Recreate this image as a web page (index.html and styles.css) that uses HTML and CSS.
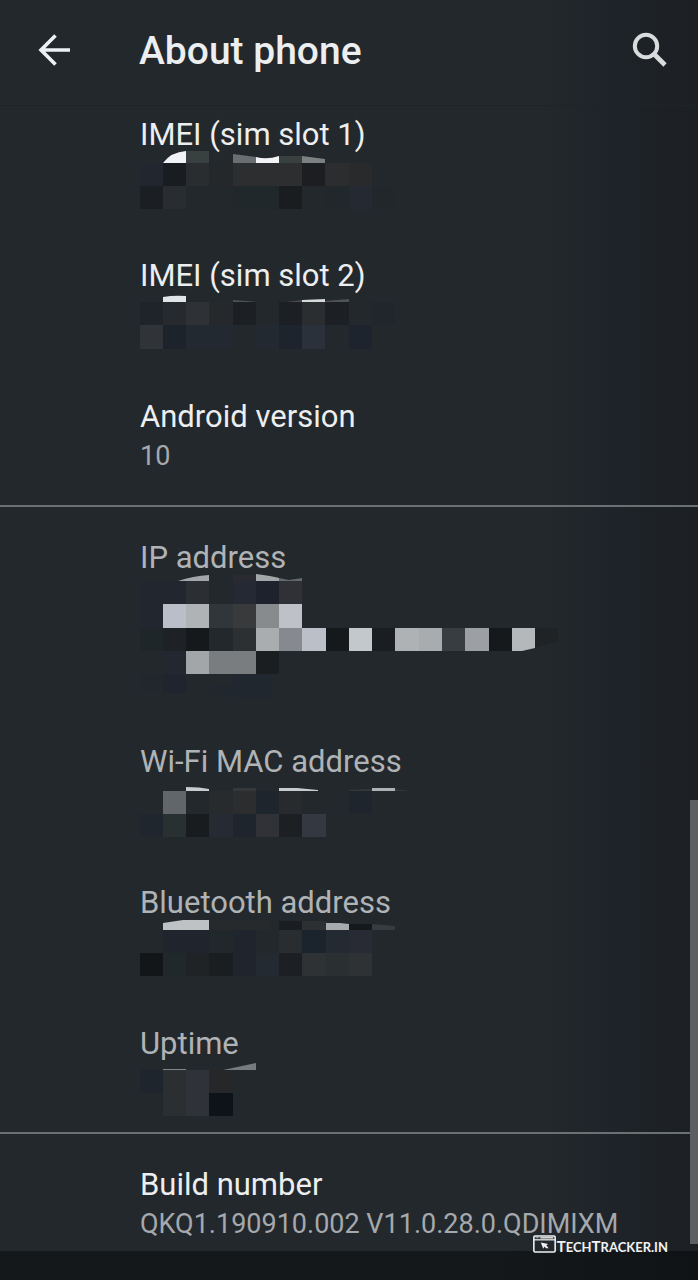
FILE: index.html
```html
<!DOCTYPE html>
<html lang="en">
<head>
<meta charset="utf-8">
<meta name="viewport" content="width=device-width, initial-scale=1">
<title>About phone</title>
<link rel="stylesheet" href="styles.css">
</head>
<body>
<div class="screen">
  <header class="bar">
    <button class="icon-button back" type="button" aria-label="Back">
      <svg width="34" height="34" viewBox="0 0 34 34" fill="none" stroke="#eef1f3" stroke-width="3.6"><path d="M33 17H4M18.500 2.500L4 17L18.500 31.500"/></svg>
    </button>
    <h1 class="title">About phone</h1>
    <button class="icon-button search" type="button" aria-label="Search">
      <svg width="36" height="36" viewBox="0 0 36 36" fill="none" stroke="#d9dcdd"><circle cx="14" cy="14" r="11.200" stroke-width="4"/><path d="M22 22L33 33" stroke-width="4.600"/></svg>
    </button>
  </header>
  <main class="content">
    <dl class="section first">
      <div class="item">
        <dt class="label">IMEI (sim slot 1)</dt>
        <dd class="value"><svg class="mosaic" role="img" aria-label="Hidden">
          <path fill="#f1f3f7" d="M23 8Q31-3 46-4V8Z"/><path fill="#384040" d="M46-4H69V8H46Z"/>
          <path fill="#6a6e70" d="M93-1L116 2V8H93Z"/><path fill="#f1f3f7" d="M116 2Q127 5 139 1V8H116Z"/><path fill="#384040" d="M139 1H162V8H139Z"/><path fill="#7c8081" d="M162 1L185 4V8H162Z"/>
          <path fill="#22272f" d="M0 8H23V31H0Z"/><path fill="#191c20" d="M23 8H46V31H23Z"/><path fill="#292d30" d="M46 8H69V31H46Z"/><path fill="#24282b" d="M69 8H93V31H69Z"/><path fill="#2d2e30" d="M93 8H162V31H93Z"/><path fill="#1c1e21" d="M162 8H185V31H162Z"/><path fill="#2c2d2f" d="M185 8H209V31H185Z"/><path fill="#292a2c" d="M209 8H232V31H209Z"/>
          <path fill="#1b1e22" d="M0 31H23V54H0Z"/><path fill="#292d30" d="M23 31H46V54H23Z"/><path fill="#20282b" d="M93 31H139V54H93Z"/><path fill="#191d20" d="M139 31H162V54H139Z"/><path fill="#20282b" d="M185 31H209V54H185ZM232 31H255V54H232Z"/><path fill="#252a32" d="M209 31H232V54H209Z"/>
        </svg></dd>
      </div>
      <div class="item">
        <dt class="label">IMEI (sim slot 2)</dt>
        <dd class="value"><svg class="mosaic" role="img" aria-label="Hidden">
          <path fill="#e0e5e7" d="M23 1Q34-1 46 0V6H23Z"/><path fill="#505254" d="M93 4L118 6H93ZM185 5L209 3V6H185Z"/><path fill="#d6d9da" d="M162 4L185 3V6H162Z"/><path fill="#484a4b" d="M145 6L162 4V6Z"/>
          <path fill="#1f232a" d="M0 6H23V29H0Z"/><path fill="#262a2e" d="M23 6H46V29H23Z"/><path fill="#2e3236" d="M46 6H69V29H46Z"/><path fill="#25292b" d="M69 6H93V29H69Z"/><path fill="#1c2024" d="M93 6H116V29H93ZM139 6H162V29H139ZM185 6H209V29H185Z"/><path fill="#2a2e30" d="M162 6H185V29H162Z"/><path fill="#20262c" d="M232 6H255V29H232Z"/>
          <path fill="#303438" d="M0 29H23V53H0Z"/><path fill="#1d232b" d="M23 29H46V53H23Z"/><path fill="#222931" d="M46 29H93V53H46ZM116 29H139V53H116Z"/><path fill="#1e242d" d="M139 29H162V53H139ZM209 29H232V53H209Z"/><path fill="#2b313b" d="M162 29H185V53H162Z"/>
        </svg></dd>
      </div>
      <div class="item">
        <dt class="label">Android version</dt>
        <dd class="value">10</dd>
      </div>
    </dl>
    <dl class="section muted">
      <div class="item">
        <dt class="label">IP address</dt>
        <dd class="value tall"><svg class="mosaic" role="img" aria-label="Hidden">
          <path fill="#a3a7aa" d="M38 3Q53-2 69-3V3ZM116-4Q132-2 139 0V3H116Z"/><path fill="#64686b" d="M139 0L149 2L162 0V3H139Z"/><path fill="#292b30" d="M93-3H116V3H93Z"/>
          <path fill="#22272f" d="M0 3H46V26H0ZM0 26H23V50H0Z"/><path fill="#2b2e33" d="M46 3H69V26H46Z"/><path fill="#242933" d="M93 3H116V26H93Z"/><path fill="#1d222c" d="M116 3H139V26H116Z"/><path fill="#303137" d="M139 3H162V26H139Z"/>
          <path fill="#b9bec8" d="M23 26H46V50H23Z"/><path fill="#b0b3b5" d="M46 26H69V50H46Z"/><path fill="#303639" d="M69 26H93V50H69Z"/><path fill="#383a3c" d="M93 26H116V50H93Z"/><path fill="#878b8e" d="M116 26H139V50H116Z"/><path fill="#bec2c8" d="M139 26H162V50H139Z"/>
          <path fill="#1f262a" d="M0 50H23V73H0Z"/><path fill="#1e2226" d="M23 50H46V73H23Z"/><path fill="#15191c" d="M46 50H69V73H46ZM186 50H209V73H186ZM349 50H372V73H349Z"/><path fill="#2d3033" d="M93 50H116V73H93Z"/><path fill="#a9adb0" d="M116 50H139V73H116Z"/><path fill="#868a90" d="M139 50H162V73H139Z"/><path fill="#bbbfc8" d="M162 50H186V73H162Z"/><path fill="#c3c8cd" d="M209 50H232V73H209Z"/><path fill="#1a1e22" d="M232 50H255V73H232Z"/><path fill="#aeb2b5" d="M255 50H279V73H255Z"/><path fill="#a8acaf" d="M279 50H302V73H279Z"/><path fill="#373d40" d="M302 50H325V73H302Z"/><path fill="#9c9fa3" d="M325 50H349V73H325Z"/><path fill="#b4b8bb" d="M372 50H395V70L382 73H372Z"/><path fill="#1f2326" d="M395 50H418V63L395 70Z"/>
          <path fill="#23272f" d="M23 73H46V96H23Z"/><path fill="#a2a6a9" d="M46 73H69V96H46Z"/><path fill="#797d80" d="M69 73H116V96H69Z"/><path fill="#1a1e21" d="M116 73H139V96H116Z"/>
          <path fill="#22272e" d="M0 96H23V112H0Z"/><path fill="#1f252f" d="M23 96H46V115H23Z"/><path fill="#20272e" d="M69 108H93V118H69ZM93 96H132V120H93Z"/>
        </svg></dd>
      </div>
      <div class="item">
        <dt class="label">Wi-Fi MAC address</dt>
        <dd class="value"><svg class="mosaic" role="img" aria-label="Hidden">
          <path fill="#c8cccf" d="M46 5Q60 5 69 7V9H46ZM139 6H157L178 8V9H139Z"/><path fill="#aeb2b5" d="M232 6H255V9H232Z"/><path fill="#34383b" d="M93 6H116V9H93ZM255 7L269 9H255ZM209 8L232 7V9H209Z"/>
          <path fill="#62666a" d="M23 9H46V32H23Z"/><path fill="#282b2e" d="M69 9H93V32H69ZM139 9H162V32H139Z"/><path fill="#2b2d2f" d="M93 9H116V32H93Z"/><path fill="#1e252d" d="M116 9H139V32H116ZM209 9H232V32H209Z"/>
          <path fill="#20262d" d="M0 32H23V55H0Z"/><path fill="#293032" d="M23 32H46V55H23Z"/><path fill="#181c1f" d="M46 32H69V55H46Z"/><path fill="#252a33" d="M69 32H93V55H69Z"/><path fill="#1f252d" d="M93 32H116V55H93Z"/><path fill="#303238" d="M116 32H139V55H116Z"/><path fill="#1d2023" d="M139 32H162V55H139Z"/><path fill="#343840" d="M162 32H186V55H162Z"/>
        </svg></dd>
      </div>
      <div class="item">
        <dt class="label">Bluetooth address</dt>
        <dd class="value"><svg class="mosaic" role="img" aria-label="Hidden">
          <path fill="#bec2c5" d="M23 0L43-3H69V7H23Z"/><path fill="#272a2c" d="M69-3H130V7H69Z"/><path fill="#1a1e22" d="M139-2H162V7H139Z"/><path fill="#2c3033" d="M162-2H186V7H162Z"/><path fill="#a7abae" d="M186 0H200L209 1V7H186Z"/><path fill="#15191c" d="M209 1H232V7H209Z"/><path fill="#383b3f" d="M232 1L255 3V7H232Z"/>
          <path fill="#1f242d" d="M23 7H69V30H23ZM93 7H116V53H93Z"/><path fill="#20282b" d="M69 7H93V30H69ZM23 30H46V53H23Z"/><path fill="#292d30" d="M139 7H162V30H139Z"/><path fill="#1b232c" d="M162 7H186V30H162Z"/><path fill="#242a32" d="M186 7H209V30H186ZM116 30H139V53H116Z"/><path fill="#282b34" d="M209 7H232V30H209Z"/>
          <path fill="#121619" d="M0 30H23V53H0Z"/><path fill="#1f2326" d="M46 30H69V53H46Z"/><path fill="#1b1e21" d="M69 30H93V53H69Z"/><path fill="#1c2025" d="M139 30H162V53H139Z"/><path fill="#2e3234" d="M162 30H186V53H162ZM209 30H232V53H209Z"/><path fill="#2a3031" d="M186 30H209V53H186Z"/>
        </svg></dd>
      </div>
      <div class="item">
        <dt class="label">Uptime</dt>
        <dd class="value"><svg class="mosaic" role="img" aria-label="Hidden">
          <path fill="#83878b" d="M23 5H46V6H23Z"/><path fill="#777b7f" d="M83 6L116-1V6Z"/>
          <path fill="#1f252d" d="M0 6H23V29H0Z"/><path fill="#2b2f31" d="M23 6H46V52H23Z"/><path fill="#303239" d="M46 6H69V52H46Z"/><path fill="#252728" d="M69 6H93V29H69Z"/><path fill="#0e131a" d="M69 29H93V52H69Z"/>
        </svg></dd>
      </div>
    </dl>
    <dl class="section last">
      <div class="item">
        <dt class="label">Build number</dt>
        <dd class="value">QKQ1.190910.002 V11.0.28.0.QDIMIXM</dd>
      </div>
    </dl>
    <div class="scrollbar"></div>
  </main>
  <footer class="nav">
    <div class="watermark">
      <svg width="23" height="18" viewBox="0 0 22 17" fill="none" stroke="#f1f2f3"><rect x=".8" y=".8" width="20.400" height="15.400" rx="1.200" stroke-width="1.500"/><path d="M1 4.500H21" stroke-width="1.200"/><path d="M2.500 2.600H6" stroke-width="1" stroke-dasharray="1 .5"/><path d="M7 2.600H19.500" stroke-width="1.300"/><path d="M7.500 7L14.500 8.500L12.700 9.700L15 12.500H12.500L11 11L9.800 13Z" fill="#f1f2f3" stroke="none"/></svg>
      <span class="brand"><span class="initial">T</span>ech<span class="initial">T</span>racker.in</span>
    </div>
  </footer>
</div>
</body>
</html>
```
FILE: styles.css
```css
* {
  box-sizing: border-box;
}

body {
  margin: 0;
  background: #14171a;
  color: #eceef0;
  font-family: Roboto, "Liberation Sans", sans-serif;
}

.screen {
  display: flex;
  flex-direction: column;
  min-height: 100vh;
  background: linear-gradient(90deg, #23282c 0%, #23282c 78%, #1f242a 87%, #1d2125 94%, #1c2024 100%);
}

.bar {
  display: flex;
  align-items: center;
  height: 106px;
  padding: 0 30px 3px 37px;
  border-bottom: 1px solid #1f2429;
}

.icon-button {
  display: flex;
  padding: 0 0 3px;
  border: 0;
  background: none;
}

.back {
  width: 102px;
}

.title {
  flex: 1;
  margin: 0;
  font-size: 39px;
  font-weight: 500;
  line-height: 48px;
}

.content {
  position: relative;
}

.section {
  display: flex;
  flex-direction: column;
  gap: 63px;
  margin: 0;
  padding: 31px 16px 30px 140px;
  border-bottom: 2px solid #6b7073;
}

.first {
  padding-top: 9px;
}

.last {
  padding-bottom: 8px;
  border-bottom: 0;
}

.label {
  font-size: 31px;
  line-height: 40px;
}

.muted .label {
  color: #b0b3b6;
}

.value {
  height: 38px;
  margin: 0;
  color: #a5a9ad;
  font-size: 27px;
  line-height: 38px;
  white-space: nowrap;
}

.tall {
  height: 101px;
}

.mosaic {
  display: block;
  width: 100%;
  height: 100%;
  overflow: visible;
}

.scrollbar {
  position: absolute;
  right: 0;
  bottom: 7px;
  width: 8px;
  height: 444px;
  background: #5b5f62;
}

.nav {
  position: relative;
  flex: 1;
  min-height: 29px;
  background: linear-gradient(90deg, #15181b 70%, #101316 100%);
}

.watermark {
  position: absolute;
  top: -16px;
  right: 30px;
  display: flex;
  align-items: flex-end;
  gap: 1px;
  color: #f1f2f3;
}

.brand {
  font-family: Lato, sans-serif;
  font-size: 13px;
  font-weight: 700;
  line-height: 12px;
  text-transform: uppercase;
}

.initial {
  font-size: 15px;
}
```
